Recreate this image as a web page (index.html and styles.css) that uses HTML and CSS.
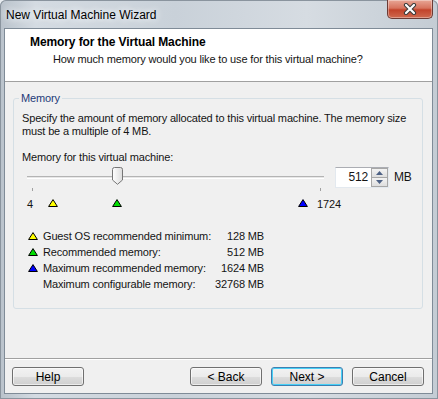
FILE: index.html
```html
<!DOCTYPE html>
<html lang="en">
    <head>
        <meta charset="UTF-8">
        <title>New Virtual Machine Wizard</title>
        <link rel="stylesheet" href="styles.css">
    </head>
    <body>
        <div class="window">
            <div class="titlebar">
                <span class="title">New Virtual Machine Wizard</span>
                <div class="close">
                    <svg width="18" height="12" viewBox="0 0 18 12">
                        <path d="M5 2 L13 10 M13 2 L5 10" stroke="#3a3a3a" stroke-width="4.2" stroke-linecap="round"/>
                        <path d="M5 2 L13 10 M13 2 L5 10" stroke="#fff" stroke-width="2.2" stroke-linecap="round"/>
                    </svg>
                </div>
            </div>
            <div class="client">
                <div class="header">
                    <div class="header-title">Memory for the Virtual Machine</div>
                    <div class="header-sub">How much memory would you like to use for this virtual machine?</div>
                </div>
                <fieldset class="group">
                    <legend>Memory</legend>
                    <p class="intro">Specify the amount of memory allocated to this virtual machine. The memory size<br>must be a multiple of 4 MB.</p>
                    <div class="field-label">Memory for this virtual machine:</div>
                    <div class="slider-row">
                        <div class="slider">
                            <div class="track"></div>
                            <svg class="thumb" style="left:90px" width="11" height="18" viewBox="0 0 11 18">
                                <defs>
                                    <linearGradient id="tg" x1="0" x2="1" y1="0" y2="0">
                                        <stop offset="0" stop-color="#ffffff"/>
                                        <stop offset="1" stop-color="#dcdcdc"/>
                                    </linearGradient>
                                </defs>
                                <path d="M0.5 2.5 Q0.5 0.5 2.5 0.5 H8.5 Q10.5 0.5 10.5 2.5 V13 L5.5 17.3 L0.5 13 Z" fill="url(#tg)" stroke="#767676"/>
                            </svg>
                        </div>
                        <div class="spin">
                            <span class="spin-value">512</span>
                            <div class="spin-btns">
                                <div class="spin-btn">
                                    <svg width="7" height="4" viewBox="0 0 7 4"><path d="M0 4 L3.5 0 L7 4 Z" fill="#4d6185"/></svg>
                                </div>
                                <div class="spin-btn">
                                    <svg width="7" height="4" viewBox="0 0 7 4"><path d="M0 0 L3.5 4 L7 0 Z" fill="#4d6185"/></svg>
                                </div>
                            </div>
                        </div>
                        <span class="unit">MB</span>
                    </div>
                    <div class="scale">
                        <span class="tick" style="left:10px"></span>
                        <span class="tick" style="left:298px"></span>
                        <span class="scale-label" style="left:5px">4</span>
                        <span class="scale-label" style="left:295px">1724</span>
                        <svg class="marker" style="left:26px" width="10" height="8" viewBox="0 0 10 8"><path d="M5 0.6 L9.4 7.5 H0.6 Z" fill="#ffff00" stroke="#000" stroke-linejoin="round"/></svg>
                        <svg class="marker" style="left:90px" width="10" height="8" viewBox="0 0 10 8"><path d="M5 0.6 L9.4 7.5 H0.6 Z" fill="#00dd00" stroke="#000" stroke-linejoin="round"/></svg>
                        <svg class="marker" style="left:276px" width="10" height="8" viewBox="0 0 10 8"><path d="M5 0.6 L9.4 7.5 H0.6 Z" fill="#0000ff" stroke="#000" stroke-linejoin="round"/></svg>
                    </div>
                    <div class="legend">
                        <div class="legend-row">
                            <svg class="legend-icon" width="10" height="8" viewBox="0 0 10 8"><path d="M5 0.6 L9.4 7.5 H0.6 Z" fill="#ffff00" stroke="#000" stroke-linejoin="round"/></svg>
                            <span class="legend-name">Guest OS recommended minimum:</span>
                            <span class="legend-value">128 MB</span>
                        </div>
                        <div class="legend-row">
                            <svg class="legend-icon" width="10" height="8" viewBox="0 0 10 8"><path d="M5 0.6 L9.4 7.5 H0.6 Z" fill="#00dd00" stroke="#000" stroke-linejoin="round"/></svg>
                            <span class="legend-name">Recommended memory:</span>
                            <span class="legend-value">512 MB</span>
                        </div>
                        <div class="legend-row">
                            <svg class="legend-icon" width="10" height="8" viewBox="0 0 10 8"><path d="M5 0.6 L9.4 7.5 H0.6 Z" fill="#0000ff" stroke="#000" stroke-linejoin="round"/></svg>
                            <span class="legend-name">Maximum recommended memory:</span>
                            <span class="legend-value">1624 MB</span>
                        </div>
                        <div class="legend-row">
                            <span class="legend-icon"></span>
                            <span class="legend-name">Maximum configurable memory:</span>
                            <span class="legend-value">32768 MB</span>
                        </div>
                    </div>
                </fieldset>
                <div class="footer">
                    <button class="btn">Help</button>
                    <div class="footer-right">
                        <button class="btn">&lt; Back</button>
                        <button class="btn btn-default">Next &gt;</button>
                        <button class="btn">Cancel</button>
                    </div>
                </div>
            </div>
        </div>
    </body>
</html>
```

FILE: styles.css
```css
*{
    margin: 0;
    padding: 0;
    box-sizing: border-box;
}
body{
    background-color: #e9edf1;
    font-family: "Liberation Sans", Arial, sans-serif;
    font-size: 11px;
    letter-spacing: -0.15px;
    color: #141414;
}
.window{
    width: 438px;
    height: 399px;
    display: flex;
    flex-direction: column;
    padding: 0 5px 5px 4px;
    background: linear-gradient(90deg, #b9c2cb 0%, #d4dbe2 8%, #c9d1d9 40%, #d6dce2 70%, #c4ccd4 100%);
    border-radius: 6px 6px 0 0;
    box-shadow: inset 0 0 0 1px #8a949e;
}
.titlebar{
    height: 28px;
    display: flex;
    justify-content: space-between;
    align-items: flex-start;
}
.title{
    margin: 8px 0 0 2px;
    font-size: 12px;
    letter-spacing: 0;
    color: #000;
    text-shadow: 0 0 6px #f2f5f8, 0 0 8px #f2f5f8;
}
.close{
    width: 46px;
    height: 19px;
    display: flex;
    align-items: center;
    justify-content: center;
    border: 1px solid #6b3b35;
    border-top: none;
    border-radius: 0 0 5px 5px;
    background: linear-gradient(#e8a696 0%, #d7735e 45%, #c2432b 55%, #cf6a4f 100%);
    box-shadow: inset 0 0 0 1px rgba(255,255,255,0.35);
}
.client{
    flex: 1;
    display: flex;
    flex-direction: column;
    background-color: #f0f0f0;
    border: 1px solid #7f8b97;
}
.header{
    height: 53px;
    padding: 6px 0 0 25px;
    background-color: #fff;
    border-bottom: 1px solid #a0a0a0;
}
.header-title{
    font-weight: bold;
    font-size: 12px;
    letter-spacing: -0.1px;
    line-height: 15px;
    color: #000;
}
.header-sub{
    margin: 2px 0 0 23px;
    line-height: 15px;
}
.group{
    margin: 9px 9px 0 8px;
    padding: 7px 8px 16px 8px;
    border: 1px solid #d5dfe5;
    border-radius: 3px;
}
.group legend{
    margin-left: -3px;
    padding: 0 2px;
    line-height: 14px;
    color: #1e3a78;
}
.intro{
    line-height: 13px;
    white-space: nowrap;
}
.field-label{
    margin-top: 13px;
    line-height: 13px;
}
.slider-row{
    margin-top: 2px;
    height: 22px;
    display: flex;
    align-items: center;
}
.slider{
    position: relative;
    width: 306px;
    height: 22px;
    display: flex;
    align-items: center;
}
.track{
    width: 297px;
    height: 3px;
    margin: 0 0 0 5px;
    background-color: #e7e7e7;
    border-top: 1px solid #b4b4b4;
    border-bottom: 1px solid #fff;
}
.thumb{
    position: absolute;
    top: 1px;
}
.spin{
    margin-left: 7px;
    width: 54px;
    height: 21px;
    display: flex;
    background-color: #fff;
    border: 1px solid #e3e9ef;
    border-top-color: #abadb3;
}
.spin-value{
    flex: 1;
    text-align: right;
    padding-right: 3px;
    line-height: 19px;
    font-size: 12px;
}
.spin-btns{
    width: 17px;
    display: flex;
    flex-direction: column;
}
.spin-btn{
    flex: 1;
    display: flex;
    align-items: center;
    justify-content: center;
    background: linear-gradient(#f3f3f3, #dedede);
    border: 1px solid #a7a7a7;
}
.spin-btn + .spin-btn{
    border-top: none;
}
.unit{
    margin-left: 5px;
    font-size: 12px;
}
.scale{
    position: relative;
    height: 23px;
}
.tick{
    position: absolute;
    top: 0;
    width: 1px;
    height: 3px;
    background-color: #a0a0a0;
}
.scale-label{
    position: absolute;
    top: 10px;
    line-height: 13px;
}
.marker{
    position: absolute;
    top: 11px;
}
.legend{
    margin-top: 17px;
    width: 242px;
    padding-left: 6px;
}
.legend-row{
    display: flex;
    align-items: center;
    height: 16px;
}
.legend-icon{
    width: 10px;
    height: 8px;
    margin-right: 5px;
}
.legend-name{
    flex: 1;
}
.legend-value{
    text-align: right;
}
.footer{
    margin-top: auto;
    padding: 8px 8px 7px 7px;
    display: flex;
    justify-content: space-between;
    border-top: 1px solid #a0a0a0;
    box-shadow: inset 0 1px 0 #fff;
}
.footer-right{
    display: flex;
    gap: 9px;
}
.btn{
    width: 72px;
    height: 19px;
    font-family: "Liberation Sans", Arial, sans-serif;
    font-size: 12px;
    color: #000;
    border: 1px solid #707070;
    border-radius: 3px;
    background: linear-gradient(#f2f2f2 0%, #ebebeb 50%, #dddddd 51%, #cfcfcf 100%);
    box-shadow: inset 0 0 0 1px rgba(255,255,255,0.6);
}
.btn-default{
    border-color: #3c7fb1;
    box-shadow: inset 0 0 0 1px #48d0f7;
}
```
